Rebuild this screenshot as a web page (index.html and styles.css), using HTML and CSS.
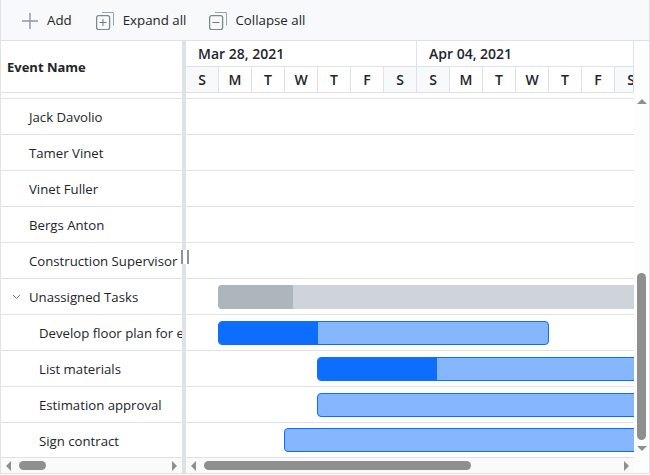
FILE: index.html
```html
<!DOCTYPE html>
<html lang="en">
<head>
<meta charset="utf-8">
<title>Gantt</title>
<link rel="stylesheet" href="styles.css">
</head>
<body>
<div class="gantt">
  <div class="toolbar">
    <div class="tool tool-add">
      <svg class="icon" width="18" height="18" viewBox="0 0 18 18"><path d="M9 1v16M1 9h16" fill="none" stroke="#8a97a6" stroke-width="1.4"/></svg>
      <span>Add</span>
    </div>
    <div class="tool tool-expand">
      <svg class="icon" width="18" height="18" viewBox="0 0 18 18" fill="none" stroke="#7d8791" stroke-width="1.300"><rect x="0.600" y="3.600" width="13" height="14" rx="2"/><path d="M6 0.500h11.500v13" stroke="#9aa3ad" stroke-width="1"/><path d="M7 7v7M3.500 10.500h7" stroke="#6f7a86" stroke-width="1"/></svg>
      <span>Expand all</span>
    </div>
    <div class="tool tool-collapse">
      <svg class="icon" width="18" height="18" viewBox="0 0 18 18" fill="none" stroke="#7d8791" stroke-width="1.300"><rect x="0.600" y="3.600" width="13" height="14" rx="2"/><path d="M6 0.500h11.500v13" stroke="#9aa3ad" stroke-width="1"/><path d="M3.500 10.500h7" stroke="#6f7a86" stroke-width="1"/></svg>
      <span>Collapse all</span>
    </div>
  </div>
  <div class="body">
    <div class="tree">
      <div class="tree-head">Event Name</div>
      <div class="partial"></div>
      <div class="row">Jack Davolio</div>
      <div class="row">Tamer Vinet</div>
      <div class="row">Vinet Fuller</div>
      <div class="row">Bergs Anton</div>
      <div class="row">Construction Supervisor</div>
      <div class="row">
        <svg class="chevron" width="9" height="6" viewBox="0 0 9 6"><path d="M1 1l3.500 3.500L8 1" fill="none" stroke="#6c7a89" stroke-width="1"/></svg>
        Unassigned Tasks
      </div>
      <div class="row row-child"><span class="clip">Develop floor plan for estimation</span></div>
      <div class="row row-child">List materials</div>
      <div class="row row-child">Estimation approval</div>
      <div class="row row-child row-last row-last-text">Sign contract</div>
      <div class="hscroll">
        <span class="arrow arrow-left"></span>
        <span class="track"><span class="thumb thumb-tree"></span></span>
        <span class="arrow arrow-right"></span>
      </div>
    </div>
    <div class="splitter"><span class="grip"></span></div>
    <div class="chart">
      <div class="chart-main">
        <div class="timeline">
          <div class="weeks">
            <div class="week">Mar 28, 2021</div>
            <div class="week week-end">Apr 04, 2021</div>
          </div>
          <div class="days">
            <div class="day off">S</div><div class="day">M</div><div class="day">T</div><div class="day">W</div><div class="day">T</div><div class="day">F</div><div class="day off">S</div>
            <div class="day off">S</div><div class="day">M</div><div class="day">T</div><div class="day">W</div><div class="day">T</div><div class="day">F</div><div class="day off">S</div>
          </div>
          <div class="partial"></div>
          <div class="row"></div>
          <div class="row"></div>
          <div class="row"></div>
          <div class="row"></div>
          <div class="row"></div>
          <div class="row row-bar">
            <div class="bar bar-summary" style="margin-left:32px;width:460px"><div class="fill" style="width:75px"></div></div>
          </div>
          <div class="row row-bar">
            <div class="bar bar-task" style="margin-left:32px;width:331px"><div class="fill" style="width:99px"></div></div>
          </div>
          <div class="row row-bar">
            <div class="bar bar-task" style="margin-left:131px;width:400px"><div class="fill" style="width:119px"></div></div>
          </div>
          <div class="row row-bar">
            <div class="bar bar-task" style="margin-left:131px;width:400px"></div>
          </div>
          <div class="row row-bar row-last">
            <div class="bar bar-task" style="margin-left:98px;width:400px"></div>
          </div>
        </div>
        <div class="hscroll">
          <span class="arrow arrow-left"></span>
          <span class="track"><span class="thumb thumb-chart"></span></span>
          <span class="arrow arrow-right"></span>
        </div>
      </div>
      <div class="vscroll">
        <span class="arrow arrow-up"></span>
        <span class="vtrack"><span class="vthumb"></span></span>
        <span class="arrow arrow-down"></span>
      </div>
    </div>
  </div>
</div>
</body>
</html>
```
FILE: styles.css
```css
* { box-sizing: border-box; }
html, body { margin: 0; padding: 0; background: #fff; }
body { width: 650px; height: 475px; overflow: hidden; font-family: "Open Sans", "Noto Sans", sans-serif; font-size: 13.2px; color: #212529; }

.gantt { width: 650px; height: 474px; border: 1px solid #dee2e6; border-top: 0; display: flex; flex-direction: column; }

.toolbar { height: 41px; flex: none; background: #f8f9fa; border-bottom: 1px solid #dee2e6; display: flex; align-items: center; }
.tool { display: flex; align-items: center; font-size: 13.3px; color: #212529; }
.tool-add { margin-left: 20px; gap: 8px; }
.tool-expand { margin-left: 24px; gap: 9px; }
.tool-collapse { margin-left: 23px; gap: 8px; }
.icon { flex: none; margin-top: 2px; }

.body { flex: 1; display: flex; min-height: 0; }
.tree { width: 181px; flex: none; display: flex; flex-direction: column; overflow: hidden; }
.tree-head { height: 52px; flex: none; display: flex; align-items: center; padding-left: 6px; font-weight: 700; font-size: 13px; border-bottom: 1px solid #dee2e6; }
.partial { height: 6px; flex: none; border-bottom: 1px solid #dee2e6; }
.row { height: 36px; flex: none; display: flex; align-items: center; padding-left: 28px; border-bottom: 1px solid #dee2e6; white-space: nowrap; }
.row-child { padding-left: 38px; }
.row-last { height: 34px; border-bottom: 0; }
.row-last-text { padding-top: 2px; }
.clip { overflow: hidden; display: block; }
.chevron { position: absolute; left: 12px; }

.splitter { width: 4px; flex: none; background: #dee2e6; position: relative; }
.grip { position: absolute; left: -1px; top: 209px; width: 8px; height: 14px; border-left: 2px solid #8f959b; border-right: 2px solid #8f959b; background: #fff; }

.chart { flex: 1; min-width: 0; display: flex; }
.chart-main { width: 448px; flex: none; display: flex; flex-direction: column; }
.timeline { flex: 1; min-height: 0; overflow: hidden; }
.weeks { display: flex; height: 26px; overflow: hidden; }
.week { width: 231px; flex: none; padding-left: 12px; display: flex; align-items: center; font-weight: 600; font-size: 14px; border-right: 1px solid #dee2e6; border-bottom: 1px solid #dee2e6; }
.week-end { width: 217px; }
.days { display: flex; height: 26px; overflow: hidden; border-right: 1px solid #dee2e6; }
.day { width: 33px; flex: none; display: flex; align-items: center; justify-content: center; font-weight: 600; font-size: 14px; border-right: 1px solid #dee2e6; border-bottom: 1px solid #dee2e6; }
.off { background: #f8f9fa; }
.row-bar { padding-left: 0; }
.bar { height: 24px; flex: none; border-radius: 4px; overflow: hidden; }
.fill { height: 100%; }
.bar-summary { background: #ced4da; }
.bar-summary .fill { background: #adb5bd; }
.bar-task { background: #86b7fe; border: 1px solid #0d6efd; }
.bar-task .fill { background: #0d6efd; }

.vscroll { flex: 1; background: #fdfdfd; display: flex; flex-direction: column; align-items: center; padding-top: 58px; }
.vtrack { height: 342px; flex: none; width: 9px; padding-top: 169px; }
.vthumb { display: block; width: 9px; height: 167px; background: #8f8f8f; border-radius: 5px; }

.hscroll { height: 16px; flex: none; background: #fafafa; border-top: 1px solid #dee2e6; display: flex; align-items: center; padding: 0 5px; }
.track { flex: 1; display: block; padding: 0 8px; }
.thumb { display: block; height: 9px; background: #8f8f8f; border-radius: 5px; }
.thumb-tree { width: 27px; }
.thumb-chart { width: 267px; }

.arrow { display: block; flex: none; width: 0; height: 0; border-style: solid; border-color: transparent; }
.arrow-left { border-width: 5px 5px 5px 0; border-right-color: #8f8f8f; }
.arrow-right { border-width: 5px 0 5px 5px; border-left-color: #8f8f8f; }
.arrow-up { border-width: 0 5px 5px 5px; border-bottom-color: #8f8f8f; }
.arrow-down { border-width: 5px 5px 0 5px; border-top-color: #8f8f8f; }
```
